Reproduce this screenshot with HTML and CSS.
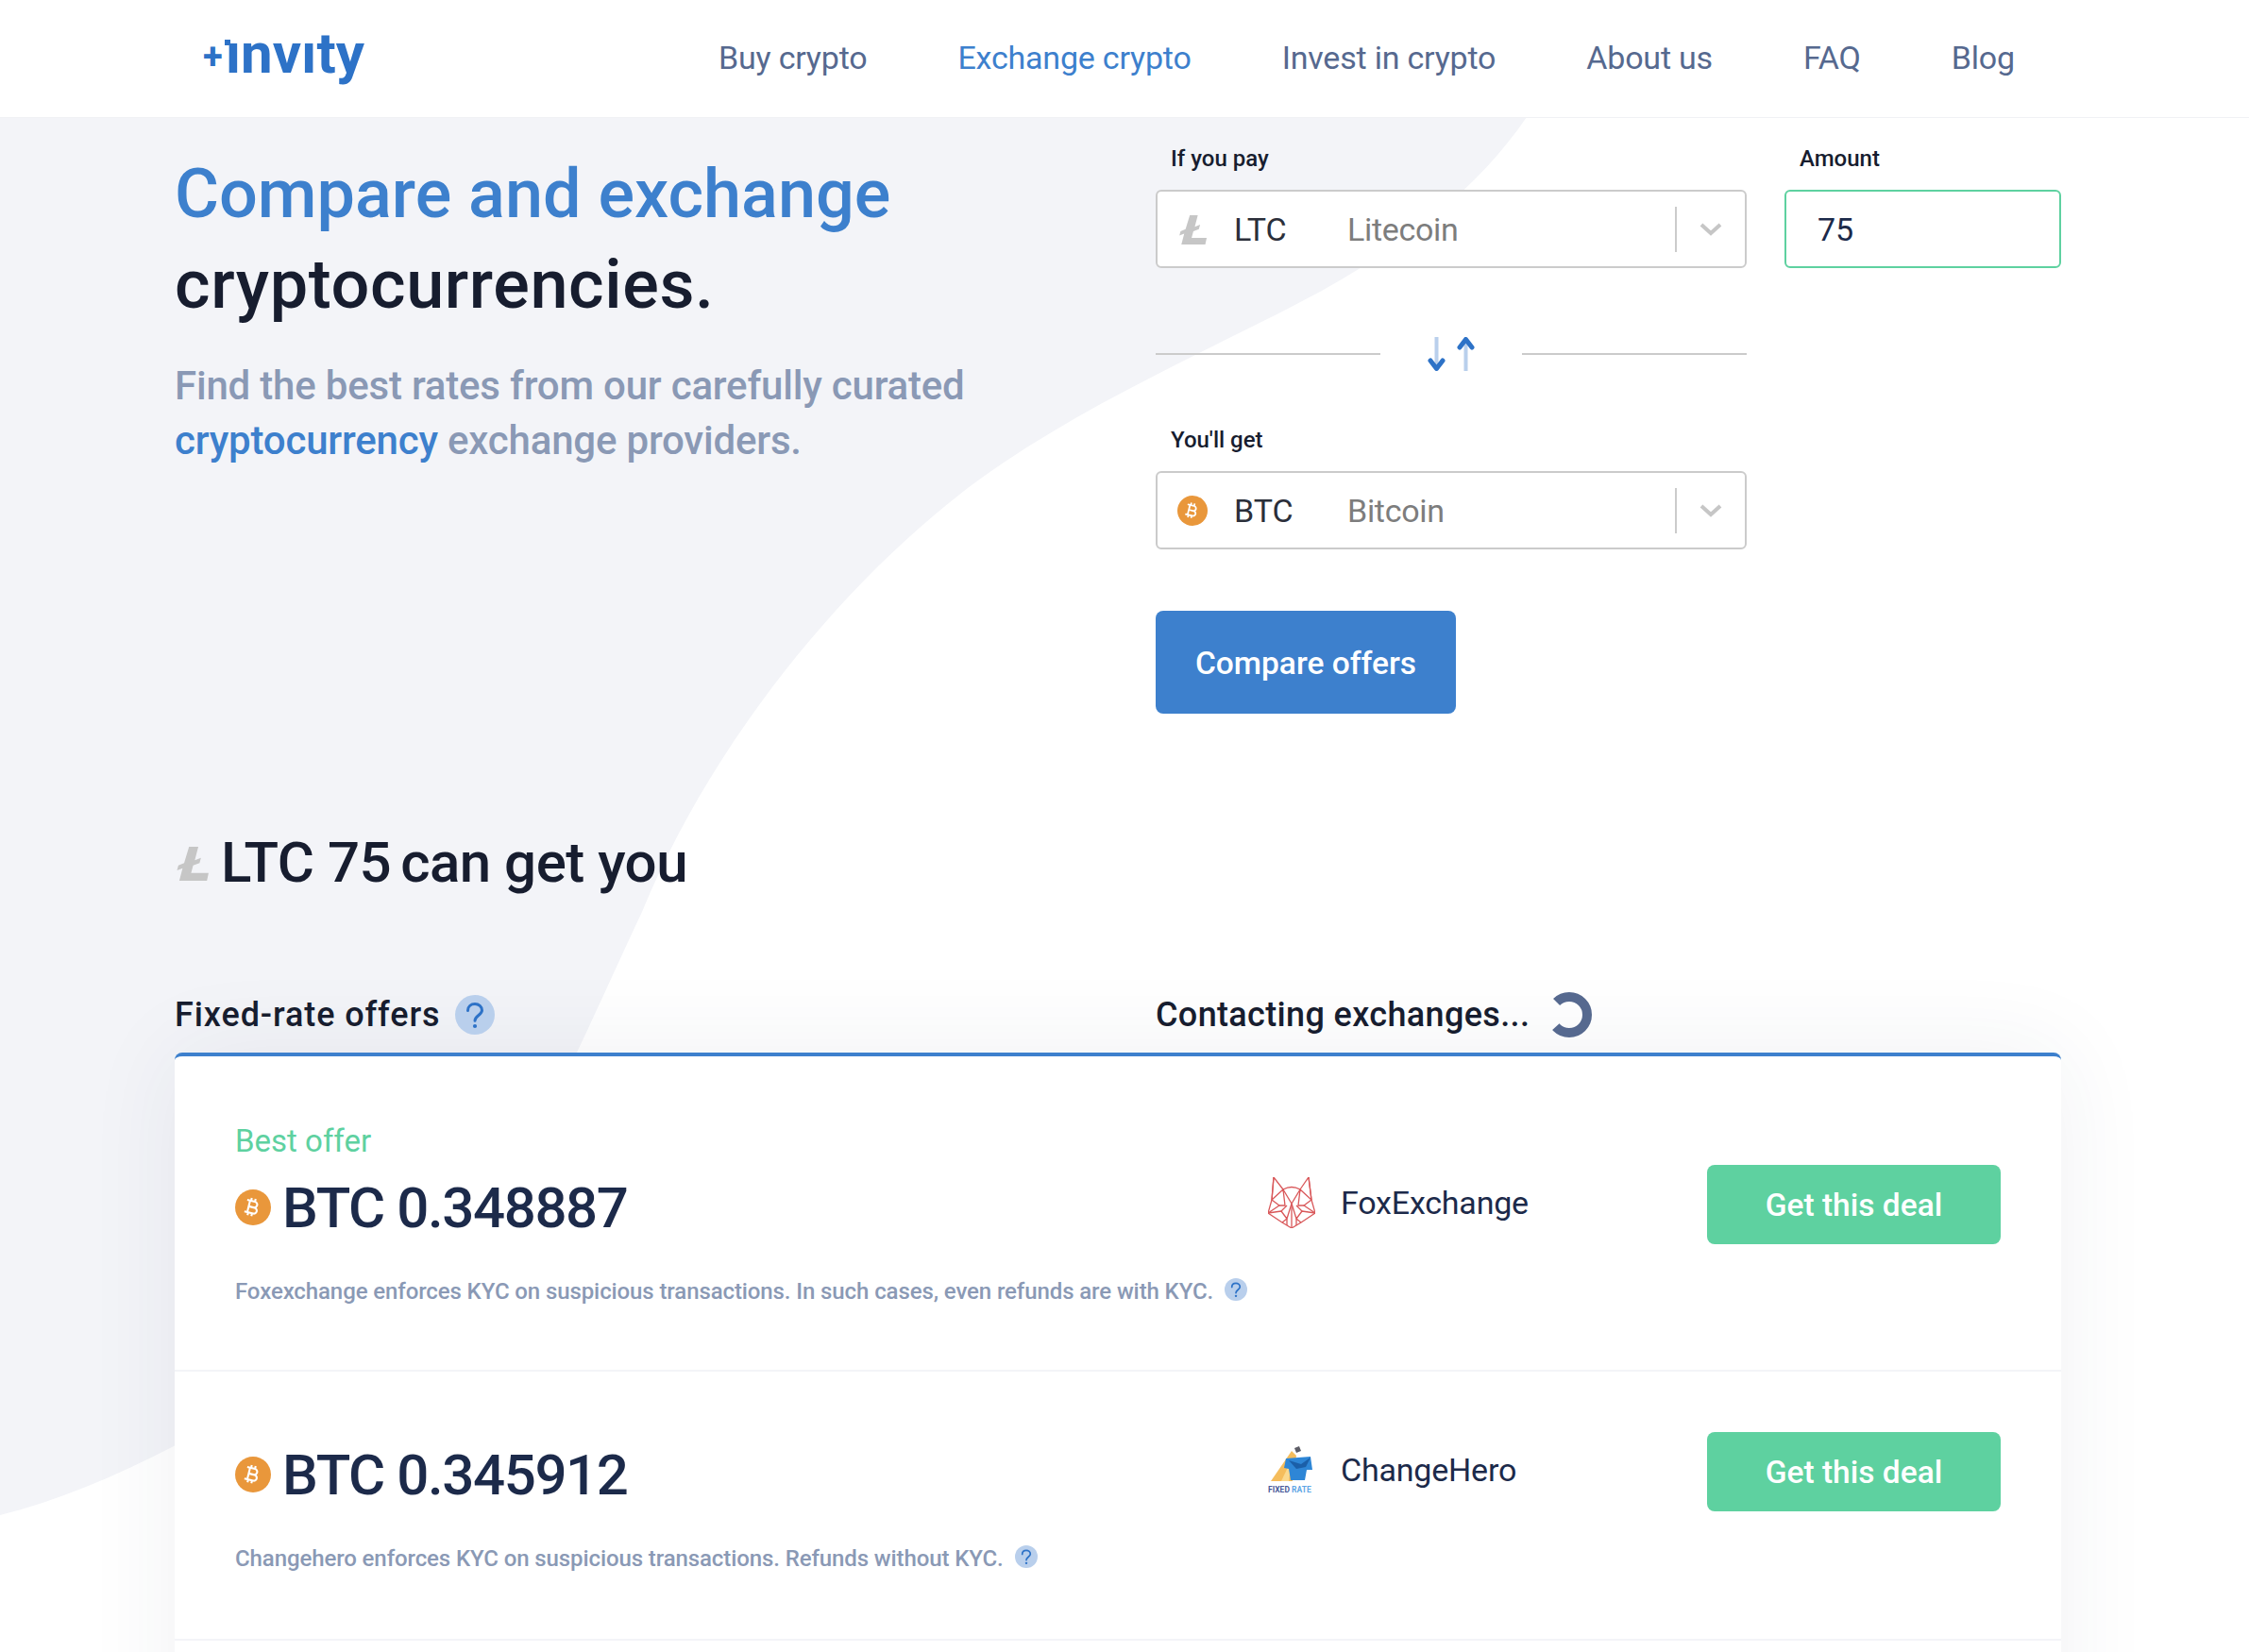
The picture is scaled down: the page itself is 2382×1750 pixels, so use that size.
FILE: index.html
```html
<!DOCTYPE html>
<html>
  <head>
    <title>Invity - Exchange crypto</title>
    <meta name="viewport" content="width=device-width, initial-scale=1.0" />
    <link rel="stylesheet" href="styles.css">
  </head>
  <body>
    <svg width="0" height="0" class="defs">
      <symbol id="btc" viewBox="0 0 38 38">
        <circle cx="19" cy="19" r="19" fill="#e9973b" />
        <g transform="translate(19 19) rotate(14) scale(1.05) translate(-13.5 -12)">
          <path fill="#fff" d="M17.06 11.57c.59-.69.94-1.59.94-2.57 0-1.86-1.27-3.43-3-3.87V3h-2v2h-2V3H9v2H6v2h2v10H6v2h3v2h2v-2h2v2h2v-2c2.21 0 4-1.79 4-4 0-1.45-.78-2.73-1.94-3.43zM10 7h4c1.1 0 2 .9 2 2s-.9 2-2 2h-4V7zm5 10h-5v-4h5c1.1 0 2 .9 2 2s-.9 2-2 2z" />
        </g>
      </symbol>
      <symbol id="ltc" viewBox="0 0 34 34">
        <path fill="#c6c6c6" d="M14 1h9l-3.4 13 6-2.2-1.4 5-6.2 2.3-2 7.4H33l-1.6 7.500H4.500l3.200-12.200-5.400 2 1.300-4.800 5.600-2.200z" />
      </symbol>
      <symbol id="help" viewBox="0 0 42 42">
        <circle cx="21" cy="21" r="21" fill="#b9cfec" />
        <path fill="none" stroke="#2d72c7" stroke-width="3" stroke-linecap="round" d="M13.500 16.500c0-4.500 3.500-7 7.500-7s7.500 2.800 7.500 6.800c0 5-7.500 5.500-7.500 11" />
        <circle cx="21" cy="33" r="2.100" fill="#2d72c7" />
      </symbol>
      <symbol id="chevron" viewBox="0 0 24 14">
        <path fill="none" stroke="#c6c6c6" stroke-width="4" d="M2 2l10 9 10-9" />
      </symbol>
    </svg>

    <svg class="blob" width="2382" height="1750" viewBox="0 0 2382 1750">
      <path fill="#f3f4f8" d="M0 124H1617C1565 200 1490 258 1400 308C1300 362 1175 415 1063 490C920 585 760 770 680 966C650 1030 630 1075 611 1115C550 1250 330 1450 184 1532C120 1565 60 1590 0 1605Z" />
    </svg>

    <header class="topbar">
      <a class="logo"><span class="logo-plus">+</span><span class="logo-i">ı</span>nvıty</a>
      <nav class="nav">
        <a>Buy crypto</a>
        <a class="active">Exchange crypto</a>
        <a>Invest in crypto</a>
        <a>About us</a>
        <a>FAQ</a>
        <a>Blog</a>
      </nav>
    </header>

    <main class="container">
      <section class="hero">
        <div class="intro">
          <h1><span class="blue">Compare and exchange</span><br /><span class="dark">cryptocurrencies.</span></h1>
          <p>Find the best rates from our carefully curated <a>cryptocurrency</a> exchange providers.</p>
        </div>
        <form class="exchange-form">
          <div class="form-row">
            <div class="field field-coin">
              <label>If you pay</label>
              <div class="select">
                <svg class="coin-icon"><use href="#ltc" /></svg>
                <span class="ticker">LTC</span>
                <span class="coin-name">Litecoin</span>
                <span class="select-arrow"><svg><use href="#chevron" /></svg></span>
              </div>
            </div>
            <div class="field field-amount">
              <label>Amount</label>
              <div class="amount-input">75</div>
            </div>
          </div>
          <div class="swap">
            <svg width="54" height="36" viewBox="0 0 54 36" fill="none" stroke-width="4">
              <path stroke="#b9cfec" d="M11.500 0v31M42.500 5v31" />
              <path stroke="#2d72c7" stroke-width="5" stroke-linecap="round" stroke-linejoin="round" d="M5 25L11.500 33.500 18 25M36 11L42.500 2.500 49 11" />
            </svg>
          </div>
          <div class="field field-coin">
            <label>You'll get</label>
            <div class="select">
              <svg class="coin-icon btc-small"><use href="#btc" /></svg>
              <span class="ticker">BTC</span>
              <span class="coin-name">Bitcoin</span>
              <span class="select-arrow"><svg><use href="#chevron" /></svg></span>
            </div>
          </div>
          <button class="compare-btn" type="button">Compare offers</button>
        </form>
      </section>

      <h2 class="result-title">
        <svg class="title-icon"><use href="#ltc" /></svg>
        <span>LTC 75</span> <span class="result-rest">can get you</span>
      </h2>

      <div class="offers-head">
        <div class="offers-label label-fixed">Fixed-rate offers <svg class="help"><use href="#help" /></svg></div>
        <div class="offers-label">Contacting exchanges...
          <svg class="spinner" viewBox="0 0 48 48">
            <circle cx="24" cy="24" r="19" fill="none" stroke="#56698f" stroke-width="10" stroke-dasharray="90 29.400" transform="rotate(-135 24 24)" />
          </svg>
        </div>
      </div>

      <div class="offers">
        <div class="offer offer-best">
          <div class="best-label">Best offer</div>
          <div class="offer-main">
            <div class="price"><svg class="price-icon"><use href="#btc" /></svg>BTC 0.348887</div>
            <div class="provider">
              <svg class="provider-logo" viewBox="0 0 50 54" fill="none" stroke="#d9585a" stroke-width="1.300" stroke-linejoin="round">
                <path d="M6 0L16 13Q25 8 34 13L43 0 46 24 50 38 35 48 25 54 15 48 0 38 4 24Z" />
                <path d="M6 0L4 24 16 13 25 28 34 13 46 24 43 0M4 24L12 30 0 38 14 36 20 44 25 28 30 44 36 36 50 38 38 30 46 24" />
                <path d="M16 13L18 30 12 30M34 13L32 30 38 30M20 44V51M25 28V54M30 44V51M15 48L20 44M35 48L30 44M14 36L20 30M36 36L30 30" />
              </svg>
              <span>FoxExchange</span>
            </div>
            <button class="deal-btn" type="button">Get this deal</button>
          </div>
          <div class="offer-note">Foxexchange enforces KYC on suspicious transactions. In such cases, even refunds are with KYC. <svg class="help-small"><use href="#help" /></svg></div>
        </div>

        <div class="offer">
          <div class="offer-main">
            <div class="price"><svg class="price-icon"><use href="#btc" /></svg>BTC 0.345912</div>
            <div class="provider">
              <svg class="provider-logo" viewBox="0 0 50 54">
                <path fill="#f5bd5c" d="M3 39L25 7 30 12 26 39Z" />
                <path fill="#fbd98e" d="M14 39L25 16 22 39Z" />
                <path fill="#2e86d6" d="M19 15L45 13 47 27 41 27 39 38 24 38 22 26 17 25Z" />
                <path fill="#1b5fa8" d="M22 17L35 21 45 14 40 24 30 26Z" />
                <path fill="#5d5d66" d="M28 4L33 2 35 7 30 9Z" />
                <text x="0" y="51" class="fixed-rate">FIXED <tspan fill="#5fa6e6">RATE</tspan></text>
              </svg>
              <span>ChangeHero</span>
            </div>
            <button class="deal-btn" type="button">Get this deal</button>
          </div>
          <div class="offer-note">Changehero enforces KYC on suspicious transactions. Refunds without KYC. <svg class="help-small"><use href="#help" /></svg></div>
        </div>

        <div class="offer"></div>
      </div>
    </main>
  </body>
</html>
```

FILE: styles.css
```css
html,
body {
  height: 1750px;
  overflow: hidden;
}
body {
  font-family: Roboto, "Liberation Sans", sans-serif;
  background: #fff;
  color: #171d2f;
  margin: 0;
  padding: 0;
  position: relative;
}
.defs {
  position: absolute;
}
.blob {
  position: absolute;
  left: 0;
  top: 0;
  z-index: -1;
}
.topbar {
  display: flex;
  align-items: center;
  height: 124px;
  padding-left: 215px;
  background: #fff;
  border-bottom: 1px solid #f0f1f4;
}
.logo {
  color: #2d72c7;
  font-size: 60px;
  font-weight: 700;
  line-height: 62px;
  margin-top: -8px;
  width: 546px;
}
.logo-plus {
  font-size: 38px;
  margin-right: 3px;
  vertical-align: 4px;
}
.logo-i {
  position: relative;
}
.logo-i::before {
  content: "";
  position: absolute;
  left: -1px;
  top: 21px;
  width: 6px;
  height: 6px;
  background: #2d72c7;
}
.nav {
  display: flex;
  gap: 96px;
  font-size: 34px;
  color: #56698f;
  letter-spacing: -0.2px;
  margin-top: -2px;
}
.nav .active {
  color: #3d80cd;
}
.container {
  width: 1998px;
  margin-left: 185px;
}
.hero {
  display: flex;
  height: 631px;
}
.intro {
  width: 1039px;
}
h1 {
  font-size: 72px;
  font-weight: 500;
  line-height: 96px;
  margin: 33px 0 0;
  color: #171d2f;
}
.blue {
  color: #3d80cd;
}
.dark {
  letter-spacing: 0.6px;
}
.intro p {
  font-size: 42px;
  font-weight: 500;
  line-height: 58px;
  color: #8a99b5;
  margin: 30px 0 0;
  width: 880px;
  letter-spacing: -0.2px;
}
.intro p a {
  color: #3d80cd;
}
.exchange-form {
  width: 959px;
}
.form-row {
  display: flex;
  gap: 40px;
}
.field label {
  display: block;
  font-size: 24px;
  font-weight: 500;
  line-height: 30px;
  padding-left: 16px;
  margin: 28px 0 18px;
}
.field-coin {
  width: 626px;
}
.field-amount {
  width: 293px;
}
.select,
.amount-input {
  box-sizing: border-box;
  display: flex;
  align-items: center;
  height: 83px;
  background: #fff;
  border: 2px solid #cbcbcb;
  border-radius: 6px;
  font-size: 34px;
}
.coin-icon {
  width: 32px;
  height: 32px;
  margin-left: 21px;
}
.ticker {
  width: 120px;
  margin-left: 28px;
  color: #2b2f3a;
}
.coin-name {
  flex: 1;
  color: #7d7d7d;
  letter-spacing: -0.3px;
}
.select-arrow {
  display: flex;
  align-items: center;
  box-sizing: border-box;
  height: 48px;
  width: 74px;
  padding-left: 24px;
  border-left: 2px solid #cbcbcb;
}
.select-arrow svg {
  width: 24px;
  height: 14px;
}
.amount-input {
  border-color: #5ed1a0;
  padding-left: 33px;
  color: #1c2a4a;
}
.swap {
  display: flex;
  align-items: center;
  justify-content: center;
  width: 626px;
  height: 130px;
  gap: 48px;
  margin-top: 26px;
}
.swap::before,
.swap::after {
  content: "";
  flex: 1;
  height: 2px;
  background: #cbcbcb;
}
.swap + .field label {
  margin-top: 11px;
}
.compare-btn {
  display: block;
  width: 318px;
  height: 109px;
  margin-top: 65px;
  padding-top: 2px;
  border: none;
  border-radius: 8px;
  background: #3d80cd;
  color: #fff;
  font-family: inherit;
  font-size: 33.500px;
  font-weight: 500;
}
.result-title {
  display: flex;
  align-items: center;
  gap: 10px;
  font-size: 60px;
  font-weight: 500;
  line-height: 72px;
  margin: 122px 0 0;
  letter-spacing: -0.5px;
}
.title-icon {
  width: 37px;
  height: 37px;
  margin-right: 2px;
}
.offers-head {
  display: flex;
  align-items: center;
  height: 50px;
  margin-top: 100px;
}
.offers-label {
  display: flex;
  flex: none;
  align-items: center;
  gap: 15px;
  font-size: 36px;
  font-weight: 500;
  letter-spacing: 0.35px;
  width: 1039px;
}
.label-fixed {
  letter-spacing: 0.9px;
}
.help {
  width: 42px;
  height: 42px;
}
.spinner {
  width: 48px;
  height: 48px;
  margin-left: 3px;
}
.offers {
  background: #fff;
  border-top: 4px solid #3d80cd;
  border-radius: 8px 8px 0 0;
  margin-top: 15px;
  box-shadow: 0 0 100px rgba(40, 50, 80, 0.07);
}
.offer {
  padding: 64px 64px 69px;
  border-bottom: 2px solid #f3f4f8;
}
.offer-best {
  padding-top: 70px;
  padding-bottom: 67px;
}
.best-label {
  color: #5ed1a0;
  font-size: 33px;
  line-height: 40px;
  margin-bottom: 5px;
}
.offer-main {
  display: grid;
  grid-template-columns: 1094px 465px 311px;
  align-items: center;
}
.price {
  display: flex;
  align-items: center;
  gap: 12px;
  height: 72px;
  margin-top: 6px;
  font-size: 60px;
  font-weight: 500;
  letter-spacing: -1.400px;
  color: #1c2a4a;
}
.price-icon {
  width: 38px;
  height: 38px;
}
.provider {
  display: flex;
  align-items: center;
  gap: 27px;
  font-size: 34px;
  letter-spacing: -0.200px;
  color: #1c2a4a;
  margin-top: -5px;
}
.provider-logo {
  width: 50px;
  height: 54px;
}
.fixed-rate {
  font-family: Roboto, sans-serif;
  font-size: 8.500px;
  font-weight: 700;
  letter-spacing: 0;
  fill: #4a5a9a;
}
.deal-btn {
  height: 84px;
  padding-top: 2px;
  border: none;
  border-radius: 8px;
  background: #5ed1a0;
  color: #fff;
  font-family: inherit;
  font-size: 33.500px;
  font-weight: 500;
}
.offer-note {
  display: flex;
  align-items: center;
  gap: 12px;
  font-size: 24px;
  font-weight: 500;
  line-height: 32px;
  letter-spacing: -0.100px;
  color: #8a99b5;
  margin-top: 34px;
}
.help-small {
  width: 24px;
  height: 24px;
  margin-top: -4px;
}
```
